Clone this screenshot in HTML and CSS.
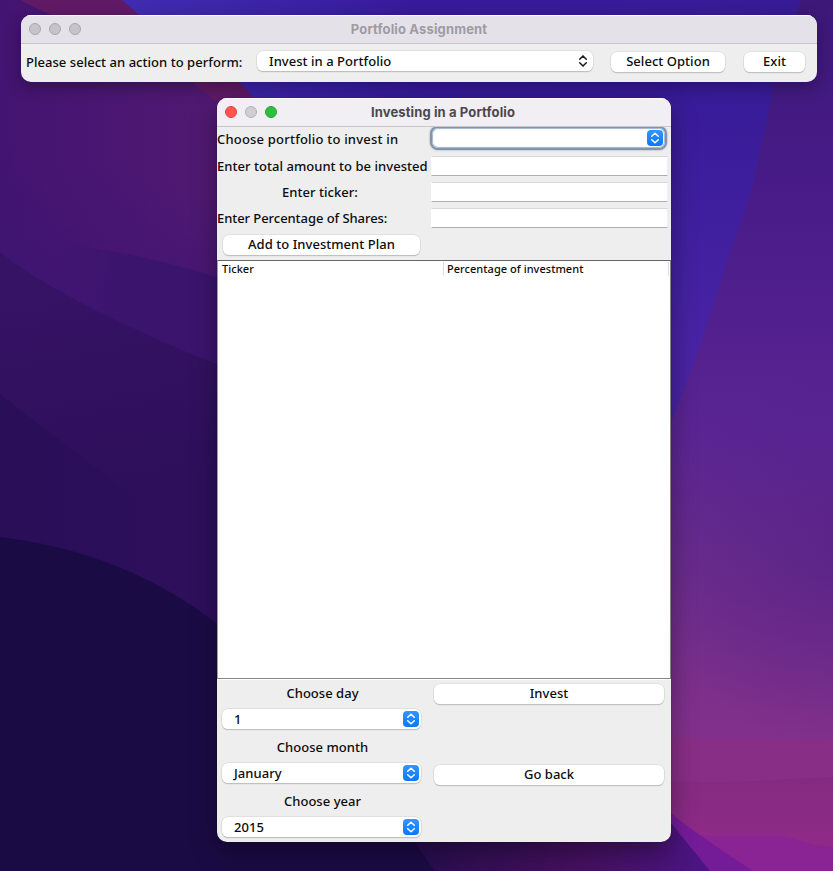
FILE: index.html
```html
<!DOCTYPE html>
<html lang="en">
<head>
<meta charset="utf-8">
<title>Portfolio Assignment</title>
<link rel="stylesheet" href="styles.css">
</head>
<body>
<svg class="wallpaper" viewBox="0 0 833 871" preserveAspectRatio="none" aria-hidden="true">
  <defs>
    <linearGradient id="sky" x1="0" y1="0" x2="1" y2="0"><stop offset="0.14" stop-color="#402cb2"/><stop offset="0.5" stop-color="#371a9c"/><stop offset="0.95" stop-color="#371b96"/></linearGradient>
    <linearGradient id="skylow" x1="0" y1="0" x2="0" y2="1"><stop offset="0.1" stop-color="#4823a4" stop-opacity="0"/><stop offset="0.4" stop-color="#4823a4"/></linearGradient>
    <linearGradient id="right" x1="0" y1="0" x2="0" y2="1"><stop offset="0" stop-color="#3c1878"/><stop offset="0.25" stop-color="#4a1c8a"/><stop offset="0.5" stop-color="#5a2592"/><stop offset="0.66" stop-color="#6b2d8b"/><stop offset="0.84" stop-color="#82308b"/></linearGradient>
    <radialGradient id="shade" gradientUnits="userSpaceOnUse" cx="843" cy="560" r="190"><stop offset="0" stop-color="#4e1c85" stop-opacity="0.5"/><stop offset="1" stop-color="#4e1c85" stop-opacity="0"/></radialGradient>
    <linearGradient id="plum" x1="0" y1="0" x2="1" y2="0"><stop offset="0" stop-color="#431471"/><stop offset="1" stop-color="#521a72"/></linearGradient>
    <linearGradient id="plumlow" gradientUnits="userSpaceOnUse" x1="50" y1="150" x2="20" y2="270"><stop offset="0" stop-color="#3d1472" stop-opacity="0"/><stop offset="1" stop-color="#3d1472"/></linearGradient>
    <linearGradient id="ridge" gradientUnits="userSpaceOnUse" x1="50" y1="0" x2="125" y2="0"><stop offset="0" stop-color="#3b146e" stop-opacity="0"/><stop offset="1" stop-color="#3b146e"/></linearGradient>
    <linearGradient id="violet" gradientUnits="userSpaceOnUse" x1="40" y1="270" x2="80" y2="500"><stop offset="0" stop-color="#371365"/><stop offset="1" stop-color="#2d0f5b"/></linearGradient>
    <linearGradient id="deep" gradientUnits="userSpaceOnUse" x1="0" y1="0" x2="150" y2="0"><stop offset="0" stop-color="#290e58"/><stop offset="1" stop-color="#2d0f5b"/></linearGradient>
    <linearGradient id="floor" x1="0" y1="0" x2="1" y2="0"><stop offset="0" stop-color="#210d4c"/><stop offset="0.6" stop-color="#45105f"/><stop offset="1" stop-color="#4b1585"/></linearGradient>
    <linearGradient id="rose" x1="0" y1="0" x2="0" y2="1"><stop offset="0" stop-color="#832b80"/><stop offset="1" stop-color="#95298c"/></linearGradient>
  </defs>
  <rect width="833" height="871" fill="url(#sky)"/>
  <rect x="600" width="233" height="871" fill="url(#skylow)"/>
  <path d="M801 0L773 86Q755 195 730 251Q705 340 660 450V871H833V0Z" fill="url(#right)"/>
  <rect x="640" y="360" width="193" height="400" fill="url(#shade)"/>
  <path d="M660 738C705 735 735 744 833 740V871H660Z" fill="#8a2e84" opacity=".8"/>
  <path d="M660 780C720 785 775 779 833 777V871H660Z" fill="url(#rose)"/>
  <path d="M660 832C715 840 765 833 786 837C805 842 818 846 833 847V871H660Z" fill="#8a2494"/>
  <path d="M0 0H122L138 14L240 82L280 128V871H0Z" fill="#601a66"/>
  <path d="M0 0H20Q48 14 86 30Q145 56 192 82L240 120V871H0Z" fill="url(#plum)"/>
  <rect y="130" width="240" height="300" fill="url(#plumlow)" opacity=".6"/>
  <path d="M50 243Q140 250 260 291V700H50Z" fill="url(#ridge)"/>
  <path d="M0 252Q40 284 120 322T260 380V700H0Z" fill="url(#violet)"/>
  <path d="M0 394Q60 440 112 480T260 600V700H0Z" fill="url(#deep)"/>
  <path d="M400 780L660 804L671 813Q690 830 753 871H400Z" fill="#741b98"/>
  <path d="M380 800H650L671 823L710 871H380Z" fill="url(#floor)"/>
  <path d="M0 537Q125 552 217 624Q340 735 435 871H0Z" fill="#1b0b45"/>
</svg>

<section class="window launcher">
  <header class="titlebar inactive">
    <span class="lights"><i></i><i></i><i></i></span>
    <h1>Portfolio Assignment</h1>
  </header>
  <div class="toolbar">
    <span class="t-prompt">Please select an action to perform:</span>
    <div class="combo wide"><span class="t-action">Invest in a Portfolio</span>
      <svg class="arrows" viewBox="0 0 16 16"><path d="M4.7 6.3L8 2.9l3.3 3.4M4.7 9.7L8 13.1l3.3-3.4"/></svg></div>
    <button class="btn select"><span>Select Option</span></button>
    <button class="btn exit"><span>Exit</span></button>
  </div>
</section>

<section class="window invest">
  <header class="titlebar">
    <span class="lights"><i class="red"></i><i></i><i class="green"></i></span>
    <h1>Investing in a Portfolio</h1>
  </header>
  <div class="form">
    <label class="t-choose">Choose portfolio to invest in</label>
    <div class="combo focused"><svg class="arrows blue" viewBox="0 0 16 16"><path d="M4.7 6.3L8 3.2l3.3 3.1M4.7 9.7L8 12.8l3.3-3.1"/></svg></div>
    <label class="t-total">Enter total amount to be invested</label>
    <div class="field"></div>
    <label class="mid t-ticker">Enter ticker:</label>
    <div class="field"></div>
    <label class="t-percent">Enter Percentage of Shares:</label>
    <div class="field"></div>
    <button class="btn add"><span>Add to Investment Plan</span></button>
  </div>
  <div class="table">
    <div class="head"><span class="h-ticker">Ticker</span><span class="h-percent">Percentage of investment</span></div>
  </div>
  <div class="actions">
    <div class="dates">
      <label class="mid">Choose day</label>
      <div class="combo"><span>1</span><svg class="arrows blue" viewBox="0 0 16 16"><path d="M4.7 6.3L8 3.2l3.3 3.1M4.7 9.7L8 12.8l3.3-3.1"/></svg></div>
      <label class="mid">Choose month</label>
      <div class="combo"><span>January</span><svg class="arrows blue" viewBox="0 0 16 16"><path d="M4.7 6.3L8 3.2l3.3 3.1M4.7 9.7L8 12.8l3.3-3.1"/></svg></div>
      <label class="mid">Choose year</label>
      <div class="combo"><span>2015</span><svg class="arrows blue" viewBox="0 0 16 16"><path d="M4.7 6.3L8 3.2l3.3 3.1M4.7 9.7L8 12.8l3.3-3.1"/></svg></div>
    </div>
    <div class="buttons">
      <button class="btn"><span>Invest</span></button>
      <button class="btn"><span>Go back</span></button>
    </div>
  </div>
</section>
</body>
</html>
```
FILE: styles.css
```css
* { box-sizing: border-box; }

body {
  margin: 0;
  width: 833px;
  height: 871px;
  overflow: hidden;
  position: relative;
  font: 500 13px/16px "Noto Sans", "Open Sans", sans-serif;
  letter-spacing: .04px;
  color: #0c0c0c;
}

.wallpaper { position: absolute; inset: 0; width: 833px; height: 871px; }

.window {
  position: absolute;
  background: #eee;
  border-radius: 10px;
  overflow: hidden;
}
.launcher { left: 21px; top: 15px; width: 796px; height: 67px; box-shadow: 0 5px 16px rgba(0, 0, 0, .3); }
.invest { left: 217px; top: 98px; width: 454px; height: 744px; box-shadow: 0 10px 26px rgba(0, 0, 0, .36), 0 0 1px rgba(0, 0, 0, .5); }

.titlebar {
  position: relative;
  display: flex;
  align-items: center;
  justify-content: center;
  height: 29px;
  background: #f1eef4;
  border-bottom: 1px solid #c8c6c9;
  box-shadow: inset 0 1px #faf9fb;
}
.titlebar h1 { margin: 0 2px 0 0; font: 700 13px/16px Inter, sans-serif; letter-spacing: .12px; color: #4a484b; }
.titlebar.inactive { background: #e5e1e9; }
.titlebar.inactive h1 { margin: 0 0 1px; letter-spacing: .14px; color: #9f9ba2; }
.lights { position: absolute; left: 8px; top: 8px; display: flex; gap: 8px; }
.lights i { width: 12px; height: 12px; border-radius: 50%; background: #d0ced3; border: 1px solid #b2b0b5; }
.inactive .lights i { background: #c6c3ca; border-color: #aaa7ae; }
.lights .red { background: #ff5650; border-color: #e0433e; }
.lights .green { background: #2bc03d; border-color: #24a532; }

.toolbar { display: flex; align-items: flex-start; padding: 7px 11px 0 5px; }
.t-prompt { width: 230px; padding-top: 3px; white-space: nowrap; }
.combo, .btn {
  display: flex;
  align-items: center;
  background: #fff;
  border: 0;
  border-radius: 6px;
  height: 20px;
  box-shadow: 0 0 0 .5px #d2d2d2, 0 1px 1px #a8a8a8;
  white-space: nowrap;
}
.combo > span, .btn > span { margin-bottom: 1px; }
.btn { justify-content: center; padding: 0; font: inherit; letter-spacing: inherit; color: inherit; }
.combo.wide { width: 336px; padding: 0 2px 0 12px; justify-content: space-between; margin-left: 1px; }
.btn.select { width: 114px; margin: 1px 0 0 18px; }
.btn.exit { width: 61px; margin: 1px 0 0 19px; }
.select > span, .exit > span { margin: 0 0 3px; }

.arrows { width: 16px; height: 16px; fill: none; stroke: #1c1c1c; stroke-width: 1.5; stroke-linecap: round; stroke-linejoin: round; }
.arrows.blue { background: linear-gradient(#3296ff, #0a78fb); border-radius: 4px; stroke: #fff; }

label { white-space: nowrap; }
.mid { text-align: center; }

.form {
  display: grid;
  grid-template-columns: 213px 241px;
  grid-template-rows: repeat(4, 26px) 29px;
  align-items: center;
  height: 133px;
}
.form .mid { padding-right: 7px; }
.t-choose { margin-top: -2px; letter-spacing: .2px; }
.t-percent { letter-spacing: -.06px; }
.combo.focused {
  align-self: start;
  height: 20px;
  width: 233px;
  margin: 1px 0 0 2px;
  padding-right: 2px;
  justify-content: flex-end;
  box-shadow: 0 0 0 2px #8294aa, inset 0 0 1px 1px #9fb4cd, 0 0 2px 2px #8294aa;
}
.field { width: 237px; height: 20px; margin-left: 1px; background: #fff; border: 1px solid #f0f0f0; border-left-color: #fff; border-top-color: #d8d8d8; border-bottom-color: #b0b0b0; }
.btn.add { width: 197px; margin-left: 6px; margin-top: -2px; }

.table { height: 419px; background: #fff; border: 1px solid #858585; border-top-color: #666; border-left-color: #a0a0a0; box-shadow: 0 1px #fff; }
.head { display: flex; font-size: 11px; line-height: 14px; padding-top: 1px; height: 15px; }
.h-ticker { width: 226px; padding-left: 4px; border-right: 1px solid #ddd; }
.h-percent { width: 225px; padding-left: 3px; border-right: 1px solid #ddd; }

.actions { display: grid; grid-template-columns: 213px 241px; margin-top: 1px; }
.dates { display: grid; grid-auto-rows: 27px; align-items: center; }
.dates .mid { padding-right: 2px; margin-top: -2px; }
.dates .combo { width: 199px; margin: -3px 0 0 5px; padding: 0 2px 0 12px; justify-content: space-between; }
.buttons { display: grid; grid-template-rows: 81px 81px; padding: 4px 6px 0 4px; }
.buttons .btn { width: 230px; }
.buttons .btn > span { margin-bottom: 3px; }
```
